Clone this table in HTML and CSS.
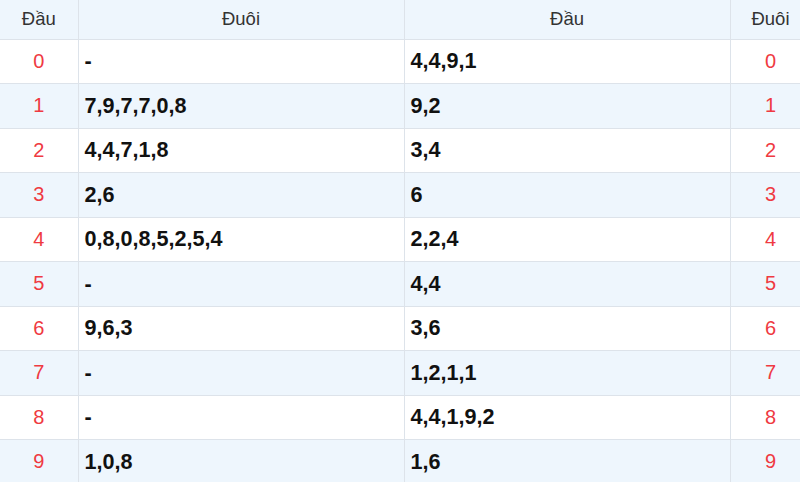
FILE: index.html
```html
<!DOCTYPE html>
<html lang="vi">
<head>
<meta charset="utf-8">
<title>Đầu Đuôi</title>
<link rel="stylesheet" href="styles.css">
</head>
<body>
<table class="loto">
  <colgroup>
    <col class="c-head"><col class="c-list"><col class="c-list"><col class="c-tail">
  </colgroup>
  <thead>
    <tr><th>Đầu</th><th>Đuôi</th><th>Đầu</th><th>Đuôi</th></tr>
  </thead>
  <tbody>
    <tr><td class="num">0</td><td class="val">-</td><td class="val">4,4,9,1</td><td class="num">0</td></tr>
    <tr><td class="num">1</td><td class="val">7,9,7,7,0,8</td><td class="val">9,2</td><td class="num">1</td></tr>
    <tr><td class="num">2</td><td class="val">4,4,7,1,8</td><td class="val">3,4</td><td class="num">2</td></tr>
    <tr><td class="num">3</td><td class="val">2,6</td><td class="val">6</td><td class="num">3</td></tr>
    <tr><td class="num">4</td><td class="val">0,8,0,8,5,2,5,4</td><td class="val">2,2,4</td><td class="num">4</td></tr>
    <tr><td class="num">5</td><td class="val">-</td><td class="val">4,4</td><td class="num">5</td></tr>
    <tr><td class="num">6</td><td class="val">9,6,3</td><td class="val">3,6</td><td class="num">6</td></tr>
    <tr><td class="num">7</td><td class="val">-</td><td class="val">1,2,1,1</td><td class="num">7</td></tr>
    <tr><td class="num">8</td><td class="val">-</td><td class="val">4,4,1,9,2</td><td class="num">8</td></tr>
    <tr><td class="num">9</td><td class="val">1,0,8</td><td class="val">1,6</td><td class="num">9</td></tr>
  </tbody>
</table>
</body>
</html>
```

FILE: styles.css
```css
html, body {
  margin: 0;
  padding: 0;
  background: #ffffff;
  overflow: hidden;
}
body {
  width: 800px;
  height: 482px;
  font-family: "Liberation Sans", Arial, sans-serif;
}
.loto {
  width: 811px;
  border-collapse: collapse;
  table-layout: fixed;
}
.c-head { width: 78px; }
.c-list { width: 326px; }
.c-tail { width: 81px; }
.loto th, .loto td {
  border: 1px solid #dde3ea;
  padding: 0 6px;
}
.loto tr:first-child th { border-top: none; }
.loto th:first-child, .loto td:first-child { border-left: none; }
.loto thead tr { height: 39px; }
.loto th {
  background: #eef6fd;
  font-weight: normal;
  font-size: 18.5px;
  color: #333333;
  text-align: center;
}
.loto tbody tr { height: 44.5px; }
.loto tbody tr:nth-child(even) td { background: #eef6fd; }
.num {
  text-align: center;
  color: #ef3a42;
  font-size: 20px;
}
.val {
  text-align: left;
  font-weight: bold;
  font-size: 21.6px;
  color: #111111;
}
```
